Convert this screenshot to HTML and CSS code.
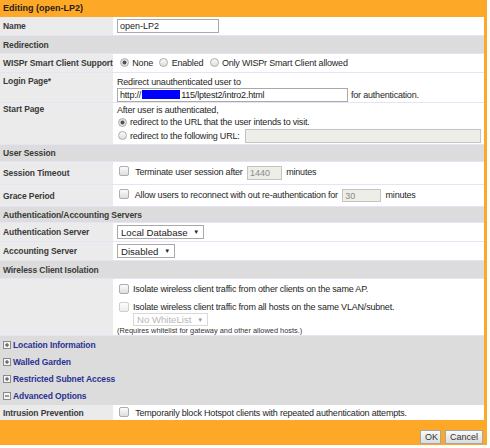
FILE: index.html
```html
<!DOCTYPE html>
<html lang="en">

<head>
    <meta charset="UTF-8" />
    <meta name="viewport" content="width=device-width, initial-scale=1.0" />
    <title>Editing (open-LP2)</title>
    <link rel="stylesheet" href="styles.css">
</head>

<body>
    <div class="dialog">
        <div class="title">Editing (open-LP2)</div>

        <table class="form">
            <tr class="h19">
                <th>Name</th>
                <td><input type="text" class="field name" value="open-LP2" /></td>
            </tr>

            <tr class="section h18">
                <td colspan="2">Redirection</td>
            </tr>
            <tr class="h19">
                <th>WISPr Smart Client Support</th>
                <td>
                    <label class="opt"><input type="radio" name="wispr" checked /> None</label>
                    <label class="opt"><input type="radio" name="wispr" /> Enabled</label>
                    <label class="opt"><input type="radio" name="wispr" /> Only WISPr Smart Client allowed</label>
                </td>
            </tr>
            <tr class="multi login">
                <th>Login Page*</th>
                <td>
                    <div class="line">Redirect unauthenticated user to</div>
                    <div class="line">
                        <span class="field url">http://<span class="mask"></span>115/lptest2/intro2.html</span>
                        for authentication.
                    </div>
                </td>
            </tr>
            <tr class="multi start">
                <th>Start Page</th>
                <td>
                    <div class="line">After user is authenticated,</div>
                    <label class="line choice"><input type="radio" name="start" checked /> redirect to the URL that the user intends to visit.</label>
                    <label class="line choice"><input type="radio" name="start" /> redirect to the following URL:
                        <input type="text" class="field wide" disabled /></label>
                </td>
            </tr>

            <tr class="section h17">
                <td colspan="2">User Session</td>
            </tr>
            <tr class="h23">
                <th>Session Timeout</th>
                <td>
                    <label><input type="checkbox" /> Terminate user session after</label>
                    <input type="text" class="field num timeout" value="1440" disabled /> minutes
                </td>
            </tr>
            <tr class="h22">
                <th>Grace Period</th>
                <td>
                    <label><input type="checkbox" /> Allow users to reconnect with out re-authentication for</label>
                    <input type="text" class="field num grace" value="30" disabled /> minutes
                </td>
            </tr>

            <tr class="section h16">
                <td colspan="2">Authentication/Accounting Servers</td>
            </tr>
            <tr class="h19">
                <th>Authentication Server</th>
                <td>
                    <span class="select"><select>
                            <option>Local Database</option>
                        </select></span>
                </td>
            </tr>
            <tr class="h19">
                <th>Accounting Server</th>
                <td>
                    <span class="select"><select>
                            <option>Disabled</option>
                        </select></span>
                </td>
            </tr>

            <tr class="section h18">
                <td colspan="2">Wireless Client Isolation</td>
            </tr>
            <tr class="multi isolation">
                <th></th>
                <td>
                    <label class="line"><input type="checkbox" /> Isolate wireless client traffic from other clients on the same AP.</label>
                    <label class="line"><input type="checkbox" disabled /> Isolate wireless client traffic from all hosts on the same VLAN/subnet.</label>
                    <div class="sub">
                        <span class="select off"><select disabled>
                                <option>No WhiteList</option>
                            </select></span>
                    </div>
                    <div class="note">(Requires whitelist for gateway and other allowed hosts.)</div>
                </td>
            </tr>

            <tr class="toggle h17">
                <td colspan="2"><svg class="tog" width="8" height="8" viewBox="0 0 8 8">
                        <rect x="0.5" y="0.5" width="7" height="7" fill="#f4f4f4" stroke="#8a8a8a" />
                        <path d="M2 4h4M4 2v4" stroke="#444" />
                    </svg><a href="#">Location Information</a></td>
            </tr>
            <tr class="toggle h17">
                <td colspan="2"><svg class="tog" width="8" height="8" viewBox="0 0 8 8">
                        <rect x="0.5" y="0.5" width="7" height="7" fill="#f4f4f4" stroke="#8a8a8a" />
                        <path d="M2 4h4M4 2v4" stroke="#444" />
                    </svg><a href="#">Walled Garden</a></td>
            </tr>
            <tr class="toggle h17">
                <td colspan="2"><svg class="tog" width="8" height="8" viewBox="0 0 8 8">
                        <rect x="0.5" y="0.5" width="7" height="7" fill="#f4f4f4" stroke="#8a8a8a" />
                        <path d="M2 4h4M4 2v4" stroke="#444" />
                    </svg><a href="#">Restricted Subnet Access</a></td>
            </tr>
            <tr class="toggle h18">
                <td colspan="2"><svg class="tog" width="8" height="8" viewBox="0 0 8 8">
                        <rect x="0.5" y="0.5" width="7" height="7" fill="#f4f4f4" stroke="#8a8a8a" />
                        <path d="M2 4h4" stroke="#444" />
                    </svg><a href="#">Advanced Options</a></td>
            </tr>
            <tr class="h15 last">
                <th>Intrusion Prevention</th>
                <td>
                    <label><input type="checkbox" /> Temporarily block Hotspot clients with repeated authentication attempts.</label>
                </td>
            </tr>
        </table>

        <div class="buttons">
            <button type="button">OK</button>
            <button type="button">Cancel</button>
        </div>
    </div>
</body>

</html>
```

FILE: styles.css
```css
* {
    box-sizing: border-box;
}

body {
    margin: 0;
    background: #ffffff;
    font-family: "Liberation Sans", Arial, sans-serif;
    font-size: 9px;
    letter-spacing: -0.2px;
    color: #262626;
}

.dialog {
    width: 487px;
    height: 445px;
    padding-right: 3px;
    background: #fea827;
    display: flex;
    flex-direction: column;
}

.title {
    height: 17px;
    line-height: 17px;
    padding-left: 3px;
    font-size: 9px;
    font-weight: bold;
    letter-spacing: 0;
    color: #2a2217;
}

/* form table */
.form {
    width: 484px;
    border-spacing: 0;
    table-layout: fixed;
    background: #ffffff;
}

.form th,
.form td {
    padding: 0;
    border-bottom: 1px solid #e7e2f4;
    vertical-align: middle;
    white-space: nowrap;
}

.form th {
    width: 113px;
    padding-left: 3px;
    text-align: left;
    font-size: 8.5px;
    letter-spacing: -0.1px;
    color: #3a3a3a;
    background: #ebebeb;
}

.form td {
    padding-left: 4px;
}

.h15 { height: 15px; }
.h16 { height: 16px; }
.h17 { height: 17px; }
.h18 { height: 18px; }
.h19 { height: 19px; }
.h22 { height: 22px; }
.h23 { height: 23px; }

.section td,
.toggle td {
    padding-left: 3px;
    font-size: 8.5px;
    font-weight: bold;
    letter-spacing: -0.1px;
    color: #3a3a3a;
    background: #dcdcdc;
}

.toggle td {
    border-bottom: 0;
}

.toggle a {
    color: #2b3192;
    text-decoration: none;
}

.tog {
    vertical-align: -1px;
    margin-right: 2px;
}

.last th,
.last td {
    border-bottom: 0;
}

/* rows with several lines */
.multi th,
.multi td {
    vertical-align: top;
}

.login th,
.login td {
    height: 30px;
    padding-top: 3px;
}

.start th,
.start td {
    height: 42px;
    padding-top: 1px;
}

.isolation th,
.isolation td {
    height: 57px;
    padding-top: 4px;
}

.line {
    display: flex;
    align-items: center;
    height: 12px;
}

.login .line + .line {
    height: 14px;
}

.choice {
    padding-left: 1px;
    gap: 3px;
}

.choice:last-child {
    height: 15px;
}

.isolation .line {
    gap: 4px;
    padding-left: 2px;
}

.isolation .line + .line {
    margin-top: 6px;
}

.sub {
    height: 13px;
    padding-left: 16px;
}

.note {
    margin-top: 1px;
    line-height: 8px;
    font-size: 7.4px;
    letter-spacing: 0;
    color: #333333;
}

/* inputs */
.field {
    display: inline-block;
    height: 14px;
    border: 1px solid #a9a9a9;
    padding: 0 2px;
    font-family: "Liberation Sans", Arial, sans-serif;
    font-size: 9px;
    color: #222222;
    background: #ffffff;
    vertical-align: middle;
}

.field:disabled {
    border-color: #c4c4c4;
    color: #8a8a8a;
    background: #eeeee9;
}

.name {
    width: 102px;
}

.url {
    width: 231px;
    line-height: 12px;
    margin-right: 3px;
}

.mask {
    display: inline-block;
    width: 38px;
    height: 9px;
    margin: 0 1px;
    background: #0000ff;
    vertical-align: -1px;
}

.wide {
    flex: 1;
    margin: 0 3px 0 2px;
}

.num {
    margin: 0 2px;
}

.timeout {
    width: 35px;
}

.grace {
    width: 39px;
    height: 13px;
}

input[type="radio"],
input[type="checkbox"] {
    appearance: none;
    margin: 0;
    vertical-align: middle;
    border: 1px solid #adadad;
    background: linear-gradient(#fbfbfb, #dedede);
}

input[type="radio"] {
    width: 9px;
    height: 9px;
    border-radius: 50%;
}

input[type="radio"]:checked {
    background: radial-gradient(circle, #505050 0 1.6px, #cfcfcf 2.2px, #f2f2f2 4px);
}

input[type="checkbox"] {
    width: 10px;
    height: 10px;
    margin: 0 4px 0 2px;
    border-radius: 2px;
    vertical-align: -1px;
}

.isolation input[type="checkbox"] {
    margin: 0;
}

input[type="checkbox"]:disabled {
    border-color: #d0d0d0;
    background: linear-gradient(#fdfdfd, #ececec);
}

.opt {
    margin-right: 4px;
}

.opt:first-child {
    margin-left: 3px;
}

.opt input {
    margin-right: 1px;
    vertical-align: -1px;
}

/* drop-downs with a small arrow */
.select {
    position: relative;
    display: inline-block;
    vertical-align: middle;
}

.select select {
    appearance: none;
    height: 14px;
    border: 1px solid #a9a9a9;
    border-radius: 0;
    padding: 0 15px 0 3px;
    font-family: "Liberation Sans", Arial, sans-serif;
    font-size: 9.6px;
    color: #222222;
    background: #ffffff;
}

.select::after {
    content: "\25BC";
    position: absolute;
    right: 5px;
    top: 4px;
    font-size: 6px;
    line-height: 6px;
    color: #222222;
    pointer-events: none;
}

.select.off {
    display: block;
    width: max-content;
}

.select.off select {
    height: 13px;
    border-color: #c8c8c8;
    color: #9a9a9a;
}

.select.off::after {
    color: #9a9a9a;
    top: 4px;
}

/* footer */
.buttons {
    flex: 1;
    display: flex;
    justify-content: flex-end;
    align-items: flex-end;
    gap: 4px;
    padding: 0 1px 1px 0;
}

.buttons button {
    height: 14px;
    padding: 0 4px;
    border: 1px solid #a6a6a6;
    font-family: "Liberation Sans", Arial, sans-serif;
    font-size: 9px;
    color: #333333;
    background: linear-gradient(#fafafa, #dcdcdc);
}

.buttons button:first-child {
    width: 21px;
}

.buttons button:last-child {
    width: 38px;
}
```
